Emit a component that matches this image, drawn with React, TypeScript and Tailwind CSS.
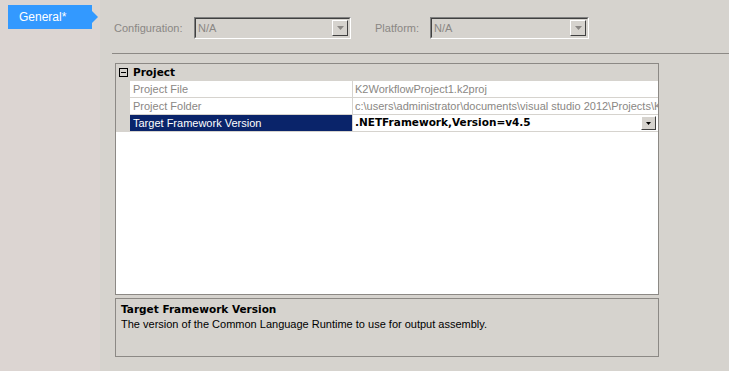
import React from "react";

const font = { fontFamily: '"Liberation Sans", Arial, sans-serif' };
const boldFont = { fontFamily: '"DejaVu Sans", Verdana, sans-serif' };

function Combo({ width }: { width: string }) {
  return (
    <div className={`${width} h-[22px] border border-t-[#808080] border-l-[#808080] border-r-white border-b-white`}>
      <div className="h-full w-full border border-t-[#404040] border-l-[#404040] border-r-[#d6d3ce] border-b-[#d6d3ce] flex items-center bg-[#d6d3ce]">
        <span className="pl-[2px] text-[#8a8784] text-[11px] leading-none flex-1">N/A</span>
        <div className="h-[16px] w-[16px] mr-[1px] bg-[#d6d3ce] border border-t-white border-l-white border-r-[#404040] border-b-[#404040] flex items-center justify-center">
          <svg width="7" height="4" viewBox="0 0 7 4"><path d="M0 0h7L3.5 4z" fill="#8a8784" /></svg>
        </div>
      </div>
    </div>
  );
}

function Row({ name, value, selected }: { name: string; value: React.ReactNode; selected?: boolean }) {
  return (
    <div className="flex h-[17px] border-b border-[#d6d3ce]">
      <div className="w-[14px] bg-[#d6d3ce]" />
      <div className={`w-[223px] border-r border-[#d6d3ce] pl-[3px] flex items-center whitespace-nowrap overflow-hidden ${selected ? "bg-[#0a246a] text-white" : "bg-white text-[#8a8784]"}`}>{name}</div>
      <div className="flex-1 bg-white flex items-center overflow-hidden whitespace-nowrap pl-[2px]">{value}</div>
    </div>
  );
}

export default function App() {
  return (
    <div className="flex h-[371px] w-[729px] bg-[#d6d3ce] text-[11px] overflow-hidden" style={font}>
      <div className="w-[100px] bg-[#dcd5d2] pt-[5px] pl-[8px]">
        <div className="relative w-[84px] h-[24px] bg-[#3399ff] text-white flex items-center pl-[11px] text-[12px]">
          General*
          <div className="absolute right-[-6px] top-[6px] w-0 h-0 border-y-[6px] border-y-transparent border-l-[6px] border-l-[#3399ff]" />
        </div>
      </div>
      <div className="flex-1 flex flex-col">
        <div className="flex items-center h-[22px] mt-[17px] pl-[14px] text-[#8a8784]">
          <span className="w-[80px]">Configuration:</span>
          <Combo width="w-[157px]" />
          <span className="ml-[24px] w-[55px]">Platform:</span>
          <Combo width="w-[159px]" />
        </div>
        <div className="ml-[12px] mt-[14px] h-px bg-[#8c8985]" />
        <div className="ml-[15px] mt-[9px] w-[544px] h-[232px] border border-[#8c8985] bg-white flex flex-col">
          <div className="flex h-[17px] items-center bg-[#d6d3ce]">
            <div className="w-[14px] flex justify-center">
              <div className="w-[9px] h-[9px] border border-black flex items-center justify-center">
                <div className="w-[5px] h-px bg-black" />
              </div>
            </div>
            <span className="pl-[3px] font-bold text-black text-[10.5px]" style={boldFont}>Project</span>
          </div>
          <Row name="Project File" value={<span className="text-[#8a8784]">K2WorkflowProject1.k2proj</span>} />
          <Row name="Project Folder" value={<span className="text-[#8a8784]">c:\users\administrator\documents\visual studio 2012\Projects\K</span>} />
          <Row
            selected
            name="Target Framework Version"
            value={
              <div className="flex items-center w-full">
                <span className="flex-1 font-bold text-black text-[10.5px]" style={boldFont}>.NETFramework,Version=v4.5</span>
                <div className="h-[14px] w-[15px] mr-[2px] bg-[#d6d3ce] border border-t-white border-l-white border-r-[#404040] border-b-[#404040] flex items-center justify-center">
                  <svg width="5" height="3" viewBox="0 0 5 3"><path d="M0 0h5L2.5 3z" fill="#000" /></svg>
                </div>
              </div>
            }
          />
          <div className="flex-1 bg-white" />
        </div>
        <div className="ml-[15px] mt-[3px] w-[544px] h-[59px] border border-[#8c8985] px-[5px] pt-[3px]">
          <div className="font-bold text-black leading-[14px] text-[10.5px]" style={boldFont}>Target Framework Version</div>
          <div className="text-black leading-[15px] mt-[1px]">The version of the Common Language Runtime to use for output assembly.</div>
        </div>
      </div>
    </div>
  );
}
